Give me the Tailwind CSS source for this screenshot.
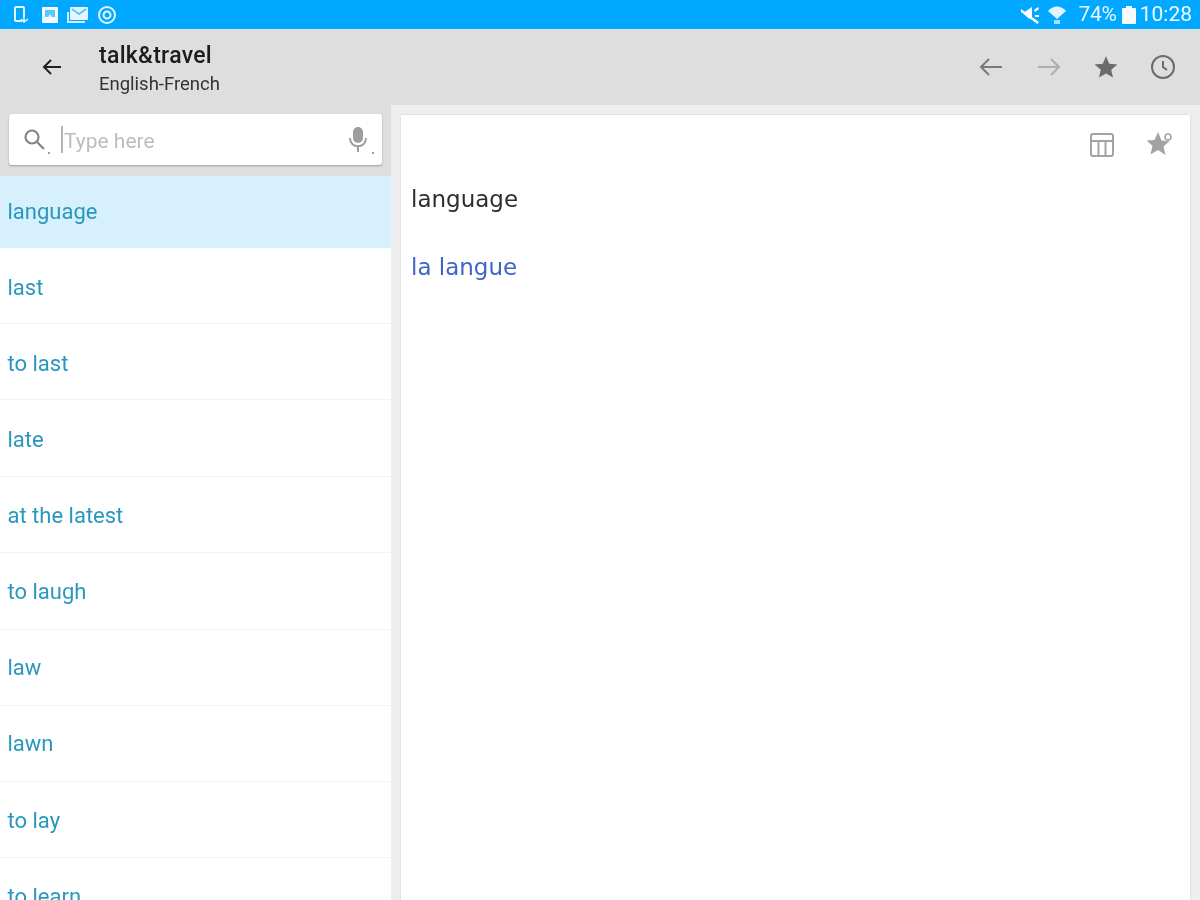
<!DOCTYPE html>
<html lang="en">
<head>
    <meta charset="UTF-8">
    <title>talk&amp;travel</title>
    <script src="https://cdn.jsdelivr.net/npm/@tailwindcss/browser@4"></script>
</head>

<body class="w-[1200px] h-[900px] overflow-hidden bg-[#eeeeee] font-['Roboto',sans-serif]">
<div class="blur-[0.5px]">
    <!-- Status bar -->
    <div class="h-[29px] bg-[#00a8ff] flex items-center justify-between pl-[11px] pr-[8px] text-white">
        <div class="flex items-center">
            <svg width="20" height="20" viewBox="0 0 20 20" fill="none" stroke="#e6f6ff" stroke-width="2" class="mr-[10px]"><path d="M11 16H5a1 1 0 0 1-1-1V3a1 1 0 0 1 1-1h7a1 1 0 0 1 1 1v9"/><path d="M13 11v5m-3-2 3 3 4-3" stroke-width="1.500"/></svg>
            <svg width="18" height="18" viewBox="0 0 18 18" class="mr-[8px]"><rect x="1" y="1" width="16" height="16" rx="1" fill="#f0faff"/><path d="M4 4h10v7H4z" fill="#5cc6ff"/><path d="M6 13l3-5 3 5z" fill="#f0faff"/></svg>
            <svg width="22" height="18" viewBox="0 0 22 18" class="mr-[8px]"><rect x="3" y="1" width="18" height="13" rx="1" fill="#e6f6ff"/><path d="M5 3l7 5 7-5" fill="none" stroke="#5cc6ff" stroke-width="2"/><path d="M1 6v10h17" fill="none" stroke="#cdeeff" stroke-width="2"/></svg>
            <svg width="20" height="20" viewBox="0 0 20 20" fill="none" stroke="#e6f6ff"><circle cx="10" cy="10" r="8" stroke-width="2"/><circle cx="10" cy="10" r="3.500" stroke-width="2"/></svg>
        </div>
        <div class="flex items-center">
            <svg width="20" height="20" viewBox="0 0 20 20" class="mr-[7px]"><path d="M1 4l18 13-1.500 2L1 7z" fill="#fff"/><path d="M3 8l9-6v11l-2 1-3-2z" fill="#fff"/><path d="M14 5l4-3 1 2-4 3zM15 10h4v2h-4z" fill="#fff"/></svg>
            <svg width="20" height="20" viewBox="0 0 20 20" class="mr-[12px]"><path d="M1 6c5-6 13-6 18 0l-9 8z" fill="#e0f5ff"/><path d="M7 15h6v4H7z" fill="#a8e0ff"/></svg>
            <span class="text-[21px] leading-none text-[#e6f6ff] tracking-[-0.3px] mr-[5px]">74%</span>
            <svg width="14" height="19" viewBox="0 0 14 19" class="mr-[4px]"><path d="M4 1h6v2h3a1 1 0 0 1 1 1v14a1 1 0 0 1-1 1H1a1 1 0 0 1-1-1V4a1 1 0 0 1 1-1h3z" fill="#f4fbff"/></svg>
            <span class="text-[21px] leading-none text-[#f0faff]">10:28</span>
        </div>
    </div>

    <!-- Toolbar -->
    <div class="h-[76px] bg-[#dedede] flex items-center">
        <svg width="24" height="24" viewBox="0 0 24 24" fill="none" stroke="#222222" stroke-width="2" class="ml-[40px] mr-[35px]"><path d="M21 12H4M11 5l-7 7 7 7"/></svg>
        <div class="flex-1 mt-[5px]">
            <div class="text-[23px] leading-[28px] font-medium tracking-[0.3px] text-[#1c1c1c]">talk&amp;travel</div>
            <div class="text-[18.500px] leading-[28px] text-[#333333]">English-French</div>
        </div>
        <div class="flex items-center pr-[24px]">
            <svg width="28" height="28" viewBox="0 0 28 28" fill="none" stroke="#7a7a7a" stroke-width="2" class="mr-[30px]"><path d="M25 14H4M12 6l-8 8 8 8"/></svg>
            <svg width="28" height="28" viewBox="0 0 28 28" fill="none" stroke="#adadad" stroke-width="2" class="mr-[30px]"><path d="M3 14h21M16 6l8 8-8 8"/></svg>
            <svg width="26" height="26" viewBox="0 0 24 24" fill="#6b6b6b" class="mr-[31px]"><path d="M12 2l3 7 7.500 .6-5.700 4.900 1.700 7.300L12 18l-6.500 3.800 1.700-7.300L1.500 9.600 9 9z"/></svg>
            <svg width="26" height="26" viewBox="0 0 26 26" fill="none" stroke="#6b6b6b" stroke-width="2"><circle cx="13" cy="13" r="11"/><path d="M13 7v6l4 3"/></svg>
        </div>
    </div>

    <div class="flex h-[795px]">
        <!-- Word list -->
        <div class="w-[391px] shrink-0 bg-white overflow-hidden">
            <div class="h-[71px] bg-[#dedede] px-[9px] pt-[9px]">
                <div class="h-[51px] bg-white rounded-[3px] shadow-[0_1px_2px_rgba(0,0,0,0.3)] flex items-center pl-[13px] pr-[11px] relative">
                    <svg width="26" height="26" viewBox="0 0 26 26" fill="none" stroke="#858585" stroke-width="2.200"><circle cx="10" cy="10" r="6.500"/><path d="M15 15l7 7"/></svg>
                    <div class="w-[2px] h-[27px] bg-[#b5b5b5] ml-[13px] mr-[1px]"></div>
                    <span class="flex-1 text-[21px] text-[#bdbdbd] pt-[4px]">Type here</span>
                    <svg width="26" height="30" viewBox="0 0 26 30" fill="#9e9e9e"><rect x="8" y="2" width="10" height="16" rx="5"/><path d="M5 13c0 11 16 11 16 0" fill="none" stroke="#9e9e9e" stroke-width="2"/><rect x="12" y="21" width="2" height="6"/></svg>
                    <div class="absolute left-[39px] bottom-[11px] w-[2px] h-[2px] bg-[#9e9e9e]"></div>
                    <div class="absolute right-[8px] bottom-[11px] w-[2px] h-[2px] bg-[#9e9e9e]"></div>
                </div>
            </div>
            <div class="h-[72px] bg-[#d6f1fd] flex items-center pl-[7.500px] pb-[2px] text-[22px] text-[#2a97bd]">language</div>
            <div class="h-[76px] border-b border-[#f3f3f3] flex items-center pl-[7.500px] pt-[3px] text-[22px] text-[#2a97bd]">last</div>
            <div class="h-[76px] border-b border-[#f3f3f3] flex items-center pl-[7.500px] pt-[3px] text-[22px] text-[#2a97bd]">to last</div>
            <div class="h-[77px] border-b border-[#f3f3f3] flex items-center pl-[7.500px] pt-[2px] text-[22px] text-[#2a97bd]">late</div>
            <div class="h-[76px] border-b border-[#f3f3f3] flex items-center pl-[7.500px] pt-[2px] text-[22px] text-[#2a97bd]">at the latest</div>
            <div class="h-[77px] border-b border-[#f3f3f3] flex items-center pl-[7.500px] pt-[1px] text-[22px] text-[#2a97bd]">to laugh</div>
            <div class="h-[76px] border-b border-[#f3f3f3] flex items-center pl-[7.500px] text-[22px] text-[#2a97bd]">law</div>
            <div class="h-[76px] border-b border-[#f3f3f3] flex items-center pl-[7.500px] text-[22px] text-[#2a97bd]">lawn</div>
            <div class="h-[76px] border-b border-[#f3f3f3] flex items-center pl-[7.500px] pt-[1px] text-[22px] text-[#2a97bd]">to lay</div>
            <div class="h-[76px] flex items-center pl-[7.500px] text-[22px] text-[#2a97bd]">to learn</div>
        </div>

        <!-- Entry -->
        <div class="flex-1 pt-[10px] pl-[10px] pr-[10px] bg-[#eeeeee]">
            <div class="h-[800px] bg-white shadow-[0_0_2px_rgba(0,0,0,0.15)] font-['DejaVu_Sans',sans-serif] pl-[10px]">
                <div class="flex justify-end items-center pt-[15px] pr-[16px] h-[44px]">
                    <svg width="26" height="26" viewBox="0 0 26 26" fill="none" stroke="#a3a3a3" stroke-width="2" class="mr-[31px]"><rect x="2" y="2" width="22" height="22" rx="2"/><path d="M2 9h22M9.500 9v15M16.500 9v15"/></svg>
                    <svg width="28" height="28" viewBox="0 0 28 28"><path d="M12 1l3.500 8.500 8 .6-6 5.400 2 8.500L12 19l-7.500 4.500 2-8.500-6-5.400 8-.6z" fill="#a3a3a3"/><circle cx="22" cy="6" r="3" fill="none" stroke="#a3a3a3" stroke-width="1.500"/></svg>
                </div>
                <div class="mt-[25px] text-[23px] leading-[30px] text-[#2e2e2e]">language</div>
                <div class="mt-[38px] text-[23px] leading-[30px] text-[#3f66c4]">la langue</div>
            </div>
        </div>
    </div>
</div>
</body>
</html>
